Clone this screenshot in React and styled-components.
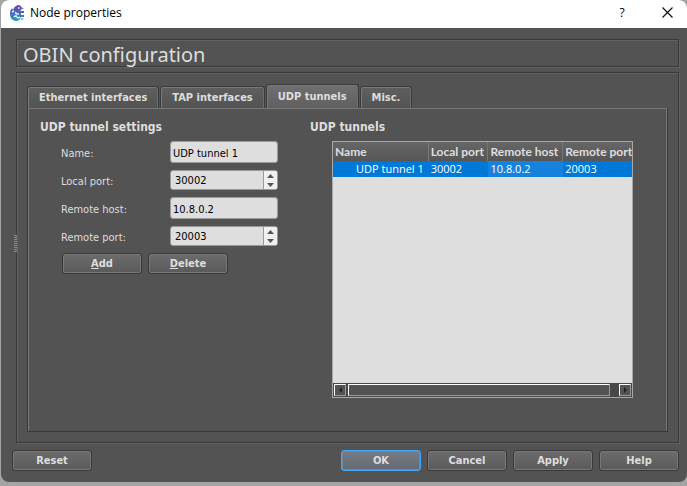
import React, { useState } from "react";
import styled, { createGlobalStyle } from "styled-components";

const GlobalStyle = createGlobalStyle`
  *, *::before, *::after { box-sizing: border-box; }
  body { margin: 0; background: #a4a4a4; }
  button, input { font: inherit; color: inherit; margin: 0; }
`;

const ui = `"Open Sans", "Noto Sans", sans-serif`;
const form = `"DejaVu Sans Condensed", "DejaVu Sans", sans-serif`;

const Desktop = styled.div`
  display: flex;
  min-height: 100vh;
  padding: 0 0 4px 1px;
  font: 11px/16px ${form};
  color: #dedede;
`;

const Dialog = styled.main`
  flex: 1;
  min-width: 0;
  display: flex;
  flex-direction: column;
  background: #535353;
  border-radius: 8px;
  overflow: hidden;
`;

const TitleBar = styled.header`
  display: flex;
  align-items: center;
  height: 28px;
  padding: 0 2px 3px 8px;
  background: #fff;
  color: #000;
  font: 12px/16px ${ui};
`;

const Title = styled.h1`
  flex: 1;
  margin: 0 0 0 5px;
  font: inherit;
`;

const TitleButton = styled.button`
  display: grid;
  place-items: center;
  width: ${(p) => (p.$close ? 36 : 54)}px;
  height: 24px;
  padding: 0;
  border: 0;
  background: none;
`;

const Frame = styled.section`
  border: 1px solid #393939;
  box-shadow: inset 1px 1px #626262, 1px 1px #626262;
`;

const Heading = styled(Frame)`
  margin: 11px 8px 0 15px;
  height: 28px;
  padding-left: 6px;
`;

const HeadingText = styled.h2`
  margin: 0;
  font: 20px/29px "Noto Sans", sans-serif;
`;

const Content = styled(Frame)`
  position: relative;
  flex: 1;
  display: flex;
  flex-direction: column;
  margin: 5px 8px 0 15px;
  padding: 11px 10px 10px;
`;

const Grip = styled.span`
  position: absolute;
  left: -3px;
  top: 162px;
  width: 3px;
  height: 17px;
  background: repeating-linear-gradient(#8b8b8b 0 1px, #535353 1px 2px);
`;

const Tabs = styled.div`
  display: flex;
  align-items: flex-end;
  gap: 1px;
`;

const Tab = styled.button`
  height: ${(p) => (p.$active ? 24 : 22)}px;
  padding: 0 11px;
  border: 1px solid #3b3b3b;
  border-bottom: 0;
  border-radius: 3px 3px 0 0;
  background: ${(p) => (p.$active ? "linear-gradient(#707070, #5f5f5f)" : "linear-gradient(#5f5f5f, #535353)")};
  box-shadow: inset 1px 1px #787878, inset -1px 0 #6c6c6c;
  font-weight: 700;
  white-space: nowrap;
`;

const Panel = styled.div`
  flex: 1;
  display: grid;
  grid-template-columns: 270px minmax(0, 1fr);
  padding: 11px 34px 33px 12px;
  border: solid #393939;
  border-width: 0 1px 1px;
  box-shadow: inset 1px 1px #787878, inset -1px 0 #787878;
`;

const Column = styled.section`
  display: flex;
  flex-direction: column;
`;

const GroupTitle = styled.h3`
  margin: 0 0 6px;
  font: 700 12px/16px ${form};
`;

const Form = styled.form`
  display: grid;
  grid-template-columns: 109px 108px;
  grid-auto-rows: 22px;
  row-gap: 6px;
  align-items: center;
  margin-left: 21px;
`;

const Label = styled.label`
  padding-top: 3px;
`;

const TextBox = styled.input`
  width: 100%;
  height: 22px;
  padding: 2px 2px 0;
  border: 1px solid #9a9a9a;
  border-radius: 3px;
  background: #dedede;
  color: #000;
  outline: 0;
`;

const Spin = styled.div`
  display: flex;
  height: 20px;
  border: 1px solid #9a9a9a;
  border-radius: 3px;
  background: #dedede;
  overflow: hidden;
`;

const SpinInput = styled.input`
  flex: 1;
  min-width: 0;
  padding: 1px 4px 0;
  border: 0;
  background: none;
  color: #000;
  outline: 0;
`;

const Steps = styled.div`
  display: flex;
  flex-direction: column;
  width: 14px;
  border-left: 1px solid #9a9a9a;
  background: #f0f0f0;
`;

const Step = styled.button`
  flex: 1;
  display: grid;
  place-items: center;
  min-height: 0;
  padding: 0;
  border: 0;
  background: none;
`;

const Button = styled.button`
  width: 80px;
  height: 21px;
  padding: 0;
  border: 1px solid ${(p) => (p.$primary ? "#42a5f5" : "#393939")};
  border-radius: 3px;
  background: ${(p) => (p.$primary ? "linear-gradient(#777d84, #626970)" : "linear-gradient(#6c6c6c, #5a5a5a)")};
  box-shadow: inset 0 0 0 1px ${(p) => (p.$primary ? "#6b8aa6" : "#787878")};
  font-weight: 700;
`;

const Actions = styled.div`
  display: flex;
  gap: 6px;
  margin: 6px 0 0 22px;
`;

const Footer = styled.footer`
  display: flex;
  gap: 6px;
  padding: 7px 8px 11px 11px;
`;

const Spacer = styled.div`
  flex: 1;
`;

const ListBox = styled.div`
  flex: 1;
  display: flex;
  flex-direction: column;
  margin: 0 0 0 22px;
  border: 1px solid #a8a8a8;
  background: #dedede;
`;

const Table = styled.table`
  width: 100%;
  table-layout: fixed;
  border-spacing: 0;
`;

const Col = styled.col`
  width: ${(p) => p.$share}%;
`;

const Th = styled.th`
  height: 19px;
  padding: 1px 0 0 2px;
  border-right: 1px solid #777;
  background: linear-gradient(#666, #565656);
  text-align: left;
  font: 700 12px/16px Lato, ${ui};
  white-space: nowrap;
  &:last-child { border-right: 0; }
`;

const Td = styled.td`
  height: 16px;
  padding: 0 0 0 ${(p) => (p.$indent ? 23 : 2)}px;
  background: ${(p) => (p.$current ? "#1583dd" : "#0078d7")};
  color: #fff;
  font: 11px/16px ${ui};
  white-space: nowrap;
`;

const ScrollBar = styled.div`
  display: flex;
  gap: 2px;
  height: 14px;
  margin-top: auto;
  padding: 1px;
  background: #484848;
`;

const ScrollButton = styled.button`
  display: grid;
  place-items: center;
  width: 12px;
  height: 12px;
  padding: 0;
  border: 1px solid;
  border-color: #fff #999 #999 #fff;
  background: #535353;
`;

const Track = styled.div`
  flex: 1;
  padding-right: 7px;
`;

const Thumb = styled.div`
  height: 12px;
  border: 1px solid;
  border-color: #fff #999 #999 #fff;
  background: #535353;
`;

function AppIcon() {
  return (
    <svg width="16" height="16" viewBox="0 0 16 16" aria-hidden="true">
      <defs>
        <linearGradient id="mark" x1="0" y1="0" x2="0" y2="1">
          <stop offset="0" stopColor="#7a3fae" />
          <stop offset=".5" stopColor="#4a68c0" />
          <stop offset="1" stopColor="#12a5c8" />
        </linearGradient>
      </defs>
      <path d="M7 1Q8 0 10 0Q13 1 13 4L11 6H15V8H12V10H15V12H12Q11 16 7 16Q1 15 1 9Q1 5 3 3L4 5Q5 2 7 1Z" fill="url(#mark)" />
      <path d="M9 3H10.5M3 7L5 6M7 7Q6 9 8 9H10M5 12Q7 10 8 12T11 12" fill="none" stroke="#e6f3fa" strokeWidth="1.5" />
      <path d="M12 3L14.500 3.500M12 14H14.500" stroke="#5a78c4" />
    </svg>
  );
}

function Arrow({ dir }) {
  const shapes = {
    up: "M0 4L3.5 0L7 4Z",
    down: "M0 0L3.5 4L7 0Z",
    left: "M4 0V6L1 3Z",
    right: "M1 0V6L4 3Z",
  };
  const flat = dir === "up" || dir === "down";
  return (
    <svg width={flat ? 7 : 5} height={flat ? 4 : 6} fill={flat ? "#555" : "#222"} aria-hidden="true">
      <path d={shapes[dir]} />
    </svg>
  );
}

function PortField({ id, value, onChange }) {
  const step = (n) => onChange(String(Number(value) + n));
  return (
    <Spin>
      <SpinInput id={id} inputMode="numeric" value={value} onChange={(e) => onChange(e.target.value)} />
      <Steps>
        <Step type="button" aria-label="Increase" onClick={() => step(1)}><Arrow dir="up" /></Step>
        <Step type="button" aria-label="Decrease" onClick={() => step(-1)}><Arrow dir="down" /></Step>
      </Steps>
    </Spin>
  );
}

const tabs = ["Ethernet interfaces", "TAP interfaces", "UDP tunnels", "Misc."];
const columns = [["Name", 32], ["Local port", 20], ["Remote host", 25], ["Remote port", 23]];

export default function App() {
  const [tab, setTab] = useState("UDP tunnels");
  const [name, setName] = useState("UDP tunnel 1");
  const [local, setLocal] = useState("30002");
  const [host, setHost] = useState("10.8.0.2");
  const [port, setPort] = useState("20003");

  return (
    <Desktop>
      <GlobalStyle />
      <Dialog>
        <TitleBar>
          <AppIcon />
          <Title>Node properties</Title>
          <TitleButton>?</TitleButton>
          <TitleButton $close aria-label="Close">
            <svg width="11" height="11" stroke="#111" strokeWidth="1.2" aria-hidden="true">
              <path d="M.5 .5L10.5 10.5M10.5 .5L.5 10.5" />
            </svg>
          </TitleButton>
        </TitleBar>
        <Heading><HeadingText>OBIN configuration</HeadingText></Heading>
        <Content>
          <Grip />
          <Tabs role="tablist">
            {tabs.map((t) => (
              <Tab key={t} role="tab" aria-selected={t === tab} $active={t === tab} onClick={() => setTab(t)}>{t}</Tab>
            ))}
          </Tabs>
          <Panel role="tabpanel">
            <Column>
              <GroupTitle>UDP tunnel settings</GroupTitle>
              <Form>
                <Label htmlFor="name">Name:</Label>
                <TextBox id="name" value={name} onChange={(e) => setName(e.target.value)} />
                <Label htmlFor="local">Local port:</Label>
                <PortField id="local" value={local} onChange={setLocal} />
                <Label htmlFor="host">Remote host:</Label>
                <TextBox id="host" value={host} onChange={(e) => setHost(e.target.value)} />
                <Label htmlFor="port">Remote port:</Label>
                <PortField id="port" value={port} onChange={setPort} />
              </Form>
              <Actions>
                <Button><u>A</u>dd</Button>
                <Button><u>D</u>elete</Button>
              </Actions>
            </Column>
            <Column>
              <GroupTitle>UDP tunnels</GroupTitle>
              <ListBox>
                <Table>
                  <colgroup>{columns.map(([c, share]) => <Col key={c} $share={share} />)}</colgroup>
                  <thead><tr>{columns.map(([c]) => <Th key={c}>{c}</Th>)}</tr></thead>
                  <tbody>
                    <tr><Td $indent>UDP tunnel 1</Td><Td>30002</Td><Td $current>10.8.0.2</Td><Td>20003</Td></tr>
                  </tbody>
                </Table>
                <ScrollBar>
                  <ScrollButton aria-label="Scroll left"><Arrow dir="left" /></ScrollButton>
                  <Track><Thumb /></Track>
                  <ScrollButton aria-label="Scroll right"><Arrow dir="right" /></ScrollButton>
                </ScrollBar>
              </ListBox>
            </Column>
          </Panel>
        </Content>
        <Footer>
          <Button>Reset</Button>
          <Spacer />
          <Button $primary>OK</Button>
          <Button>Cancel</Button>
          <Button>Apply</Button>
          <Button>Help</Button>
        </Footer>
      </Dialog>
    </Desktop>
  );
}
